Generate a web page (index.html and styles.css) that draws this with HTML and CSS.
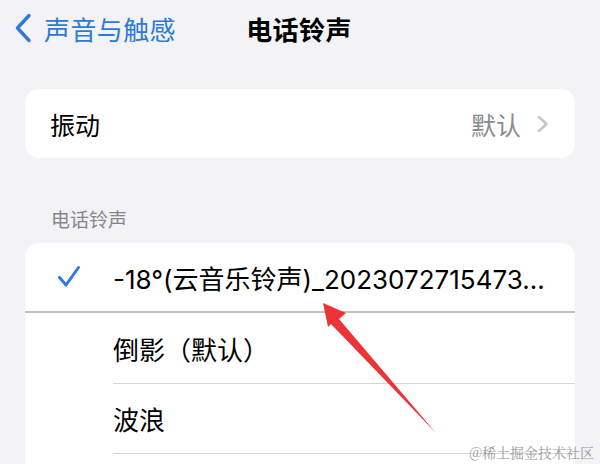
FILE: index.html
```html
<!DOCTYPE html>
<html lang="zh">
<head>
<meta charset="utf-8">
<link rel="stylesheet" href="styles.css">
</head>
<body>
<div class="screen">
  <header class="nav">
    <a class="back">
      <svg class="back-icon" width="20" height="30" viewBox="0 0 20 30"><path d="M16 2.5 L4.5 15 L16 27.5" fill="none" stroke="#2f7ad8" stroke-width="3.4" stroke-linecap="round" stroke-linejoin="round"/></svg>
      <span>声音与触感</span>
    </a>
    <h1 class="title">电话铃声</h1>
    <span></span>
  </header>

  <section class="card card-single">
    <div class="row row-detail">
      <span class="label">振动</span>
      <span class="value">默认</span>
      <svg class="chev" width="12" height="18" viewBox="0 0 12 18"><path d="M2 2 L9.5 9 L2 16" fill="none" stroke="#c4c4c7" stroke-width="2.4" stroke-linecap="round" stroke-linejoin="round"/></svg>
    </div>
  </section>

  <div class="section-title">电话铃声</div>

  <section class="card card-list">
    <div class="row row-check selected">
      <span class="check">
        <svg width="24" height="24" viewBox="0 0 24 24"><path d="M2.5 12.5 L9 20 L21.5 2.5" fill="none" stroke="#2f79e6" stroke-width="3" stroke-linecap="round" stroke-linejoin="round"/></svg>
      </span>
      <span class="label mixed">-18°(云音乐铃声)_2023072715473...</span>
    </div>
    <div class="row row-check">
      <span class="check"></span>
      <span class="label">倒影（默认）</span>
    </div>
    <div class="row row-check">
      <span class="check"></span>
      <span class="label">波浪</span>
    </div>
    <div class="row row-check">
      <span class="check"></span>
      <span class="label"></span>
    </div>
  </section>

  <svg class="arrow" width="600" height="464" viewBox="0 0 600 464"><polygon points="323,303 346,313 339,319 436,433 331,324 328,327" fill="#ec3338"/></svg>
  <div class="watermark">@稀土掘金技术社区</div>
</div>
</body>
</html>
```

FILE: styles.css
```css
* { box-sizing: border-box; }
html, body { margin: 0; padding: 0; }
body {
  background: #f2f2f7;
  font-family: "Noto Sans CJK SC", "Noto Sans", sans-serif;
  color: #000;
}
.screen {
  position: relative;
  width: 600px;
  height: 464px;
  overflow: hidden;
}
.nav {
  display: grid;
  grid-template-columns: 1fr auto 1fr;
  align-items: center;
  height: 56px;
}
.back {
  display: flex;
  align-items: center;
  gap: 11px;
  padding-left: 13px;
  color: #2f7ad8;
  font-size: 26px;
  letter-spacing: 0.4px;
}
.back-icon { display: block; }
.title {
  margin: 0;
  font-size: 26px;
  font-weight: 700;
  letter-spacing: 0.4px;
  text-align: center;
  transform: translateX(-1px);
}
.card {
  background: #fff;
  margin: 0 25px;
  border-radius: 14px;
  overflow: hidden;
}
.card-single { margin-top: 33px; }
.row {
  display: flex;
  align-items: center;
  height: 70px;
  font-size: 25px;
}
.row-detail { height: 69px; padding: 0 26px 0 25px; }
.row-detail .label { flex: 1; }
.row-detail .value { color: #8a8a8e; margin-right: 16px; }
.chev { display: block; }
.section-title {
  color: #86868b;
  font-size: 19px;
  padding: 47px 0 0 51px;
  height: 85px;
}
.card-list { border-radius: 14px 14px 0 0; }
.row-check { padding-left: 0; position: relative; }
.row-check .check {
  width: 88px;
  display: flex;
  justify-content: flex-start;
  padding-left: 32px;
}
.row-check .check svg { display: block; }
.row-check + .row-check { border-top: 1px solid #d6d6d8; margin-left: 88px; font-size: 26px; }
.row-check + .row-check .check { display: none; }
.row-check.selected { border-bottom: 2px solid #c2c2c4; height: 70px; }
.row-check.selected + .row-check { border-top: none; }
.mixed { font-family: "Inter", "Noto Sans CJK SC", sans-serif; font-size: 26px; letter-spacing: 0; }
.arrow { position: absolute; left: 0; top: 0; pointer-events: none; }
.watermark {
  position: absolute;
  right: 6px;
  bottom: 2px;
  font-family: "Noto Serif CJK SC", "Noto Sans CJK SC", serif;
  font-size: 14px;
  color: #9a9a9e;
}
```
